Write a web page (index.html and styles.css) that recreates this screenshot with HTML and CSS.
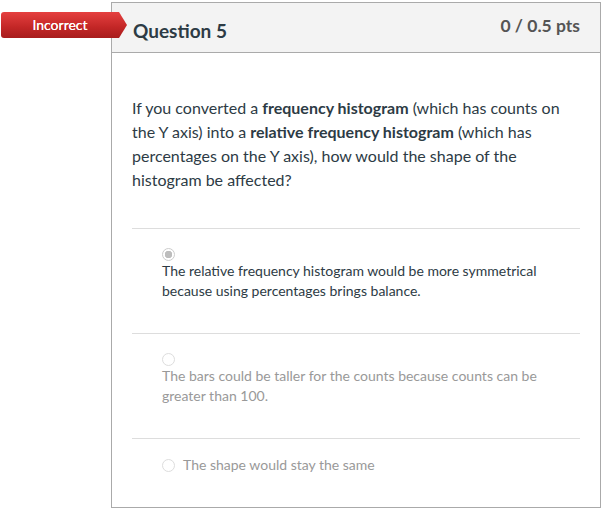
FILE: index.html
```html
<!DOCTYPE html>
<html lang="en">
<head>
  <meta charset="UTF-8" />
  <meta name="viewport" content="width=device-width, initial-scale=1.0"/>
  <title>Question 5</title>
  <link rel="stylesheet" href="styles.css">
</head>
<body>
  <div class="quiz">
    <div class="badge">Incorrect</div>

    <div class="card">
      <div class="card-header">
        <h2 class="title">Question 5</h2>
        <span class="points">0 / 0.5 pts</span>
      </div>

      <div class="card-body">
        <p class="question">If you converted a <b>frequency histogram</b> (which has counts on the Y axis) into a <b>relative frequency histogram</b> (which has percentages on the Y axis), how would the shape of the histogram be affected?</p>

        <div class="answers">
          <div class="answer chosen">
            <span class="radio"></span>
            <div class="answer-text">The relative frequency histogram would be more symmetrical because using percentages brings balance.</div>
          </div>
          <div class="answer">
            <span class="radio"></span>
            <div class="answer-text">The bars could be taller for the counts because counts can be greater than 100.</div>
          </div>
          <div class="answer inline">
            <span class="radio"></span>
            <div class="answer-text">The shape would stay the same</div>
          </div>
        </div>
      </div>
    </div>
  </div>
</body>
</html>
```

FILE: styles.css
```css
body {
  margin: 0;
  font-family: Lato, "Open Sans", Arial, sans-serif;
  background-color: #fff;
  color: #2d3b45;
}

.quiz {
  position: relative;
  padding: 2px 0 0 111px;
}

/* fita vermelha por cima da borda do cartão */
.badge {
  position: absolute;
  top: 12px;
  left: 1px;
  width: 126px;
  height: 26px;
  box-sizing: border-box;
  padding-right: 8px;
  line-height: 26px;
  text-align: center;
  font-size: 14px;
  color: #fff;
  text-shadow: 0 0 0.4px #fff;
  background: linear-gradient(#e5403f, #c22626 60%, #a81c1c);
  border-radius: 3px 0 0 3px;
  clip-path: polygon(0 0, 118px 0, 126px 50%, 118px 100%, 0 100%);
  z-index: 2;
}

.card {
  width: 488px;
  height: 504px;
  border: 1px solid #aaa;
  display: flex;
  flex-direction: column;
}

.card-header {
  height: 49px;
  padding: 0 20px 0 21px;
  background-color: #f3f3f3;
  border-bottom: 1px solid #aaa;
  display: flex;
  align-items: center;
  justify-content: space-between;
}

.title {
  margin: 5px 0 0;
  font-size: 19px;
  font-weight: 700;
  color: #2d3b45;
}

.points {
  margin-top: -4px;
  font-size: 17.5px;
  font-weight: 700;
  color: #555;
}

.card-body {
  padding: 43px 20px 0 20px;
}

.question {
  margin: 0 0 36px;
  font-size: 16px;
  line-height: 24px;
}

.answer {
  border-top: 1px solid #ddd;
  padding: 19px 14px 32px 30px;
  font-size: 14px;
  line-height: 20px;
  color: #999;
}

.answer.chosen {
  color: #2d3b45;
}

.answer.inline {
  display: flex;
  align-items: center;
  gap: 8px;
  padding-top: 16px;
}

.radio {
  display: block;
  width: 11px;
  height: 11px;
  border: 1px solid #ddd;
  border-radius: 50%;
  background: #fff;
}

.chosen .radio {
  border-color: #ccc;
  background: radial-gradient(circle, #bdbdbd 0 3.5px, #fff 4px);
}
```
